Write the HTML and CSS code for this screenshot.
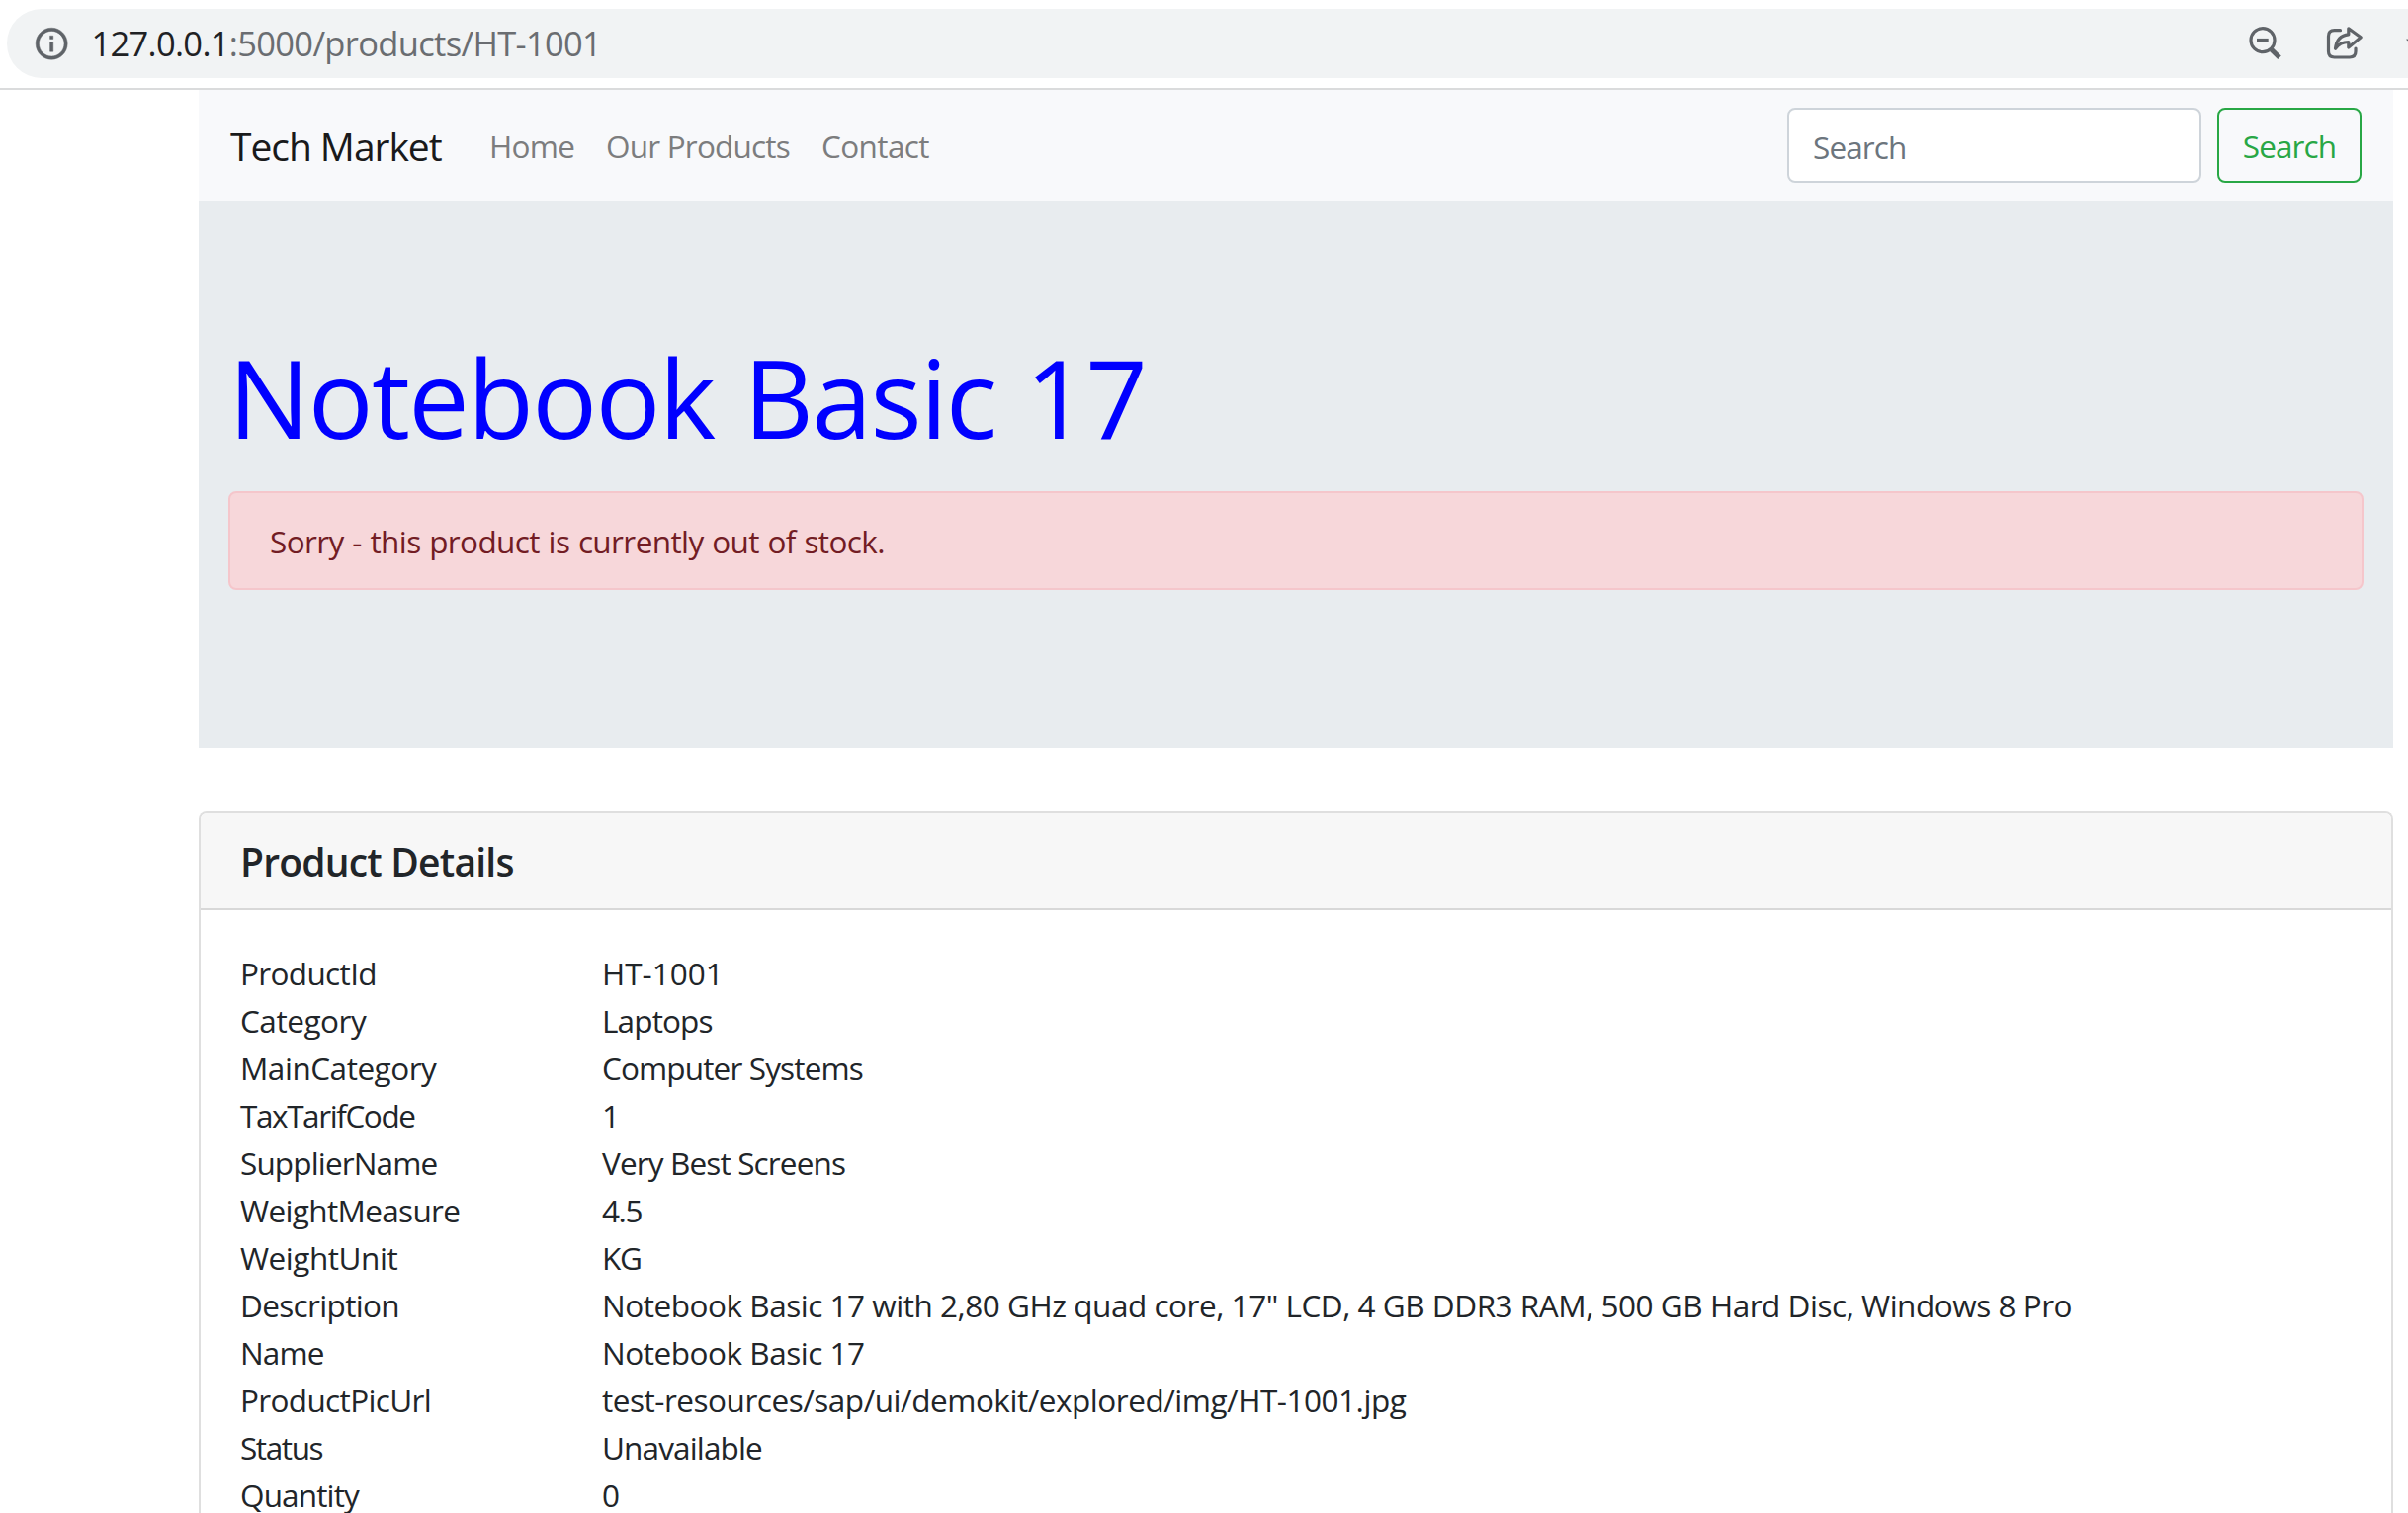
FILE: index.html
```html
<!DOCTYPE html>
<html lang="en">
<head>
<meta charset="utf-8">
<title>Tech Market</title>
<link rel="stylesheet" href="styles.css">
</head>
<body>
<header class="toolbar">
  <div class="address">
    <svg class="info" viewBox="0 0 24 24"><path d="M11 7h2v2h-2zm0 4h2v6h-2zm1-9C6.480 2 2 6.480 2 12s4.480 10 10 10 10-4.480 10-10S17.520 2 12 2zm0 18c-4.410 0-8-3.590-8-8s3.590-8 8-8 8 3.590 8 8-3.590 8-8 8z"/></svg>
    <span class="url"><span class="host">127.0.0.1</span>:5000/products/HT-1001</span>
    <div class="actions">
      <svg class="action zoom" viewBox="0 0 40 40"><circle cx="17" cy="16.700" r="12"/><path d="M11 16.500h11.700"/><path class="handle" d="M25.800 26.200L34 34.200"/></svg>
      <svg class="action share" viewBox="0 0 40 40"><path d="M15.500 6.700h-6q-6 0-6 6v15.300q0 6 6 6h15.500q6 0 6-6v-3"/><path d="M23.800 4.800L36.200 13.700 23.800 24v-5.500C17.500 18.500 13.500 21 10.500 25.300C11.500 16.500 16 11.500 23.800 10.800z"/></svg>
      <svg class="action star" viewBox="0 0 40 40"><path d="M18 4l4.600 10.700 11.600 1-8.800 7.600 2.600 11.300-10-6-10 6 2.600-11.300-8.800-7.600 11.600-1z"/></svg>
    </div>
  </div>
</header>
<div class="container">
  <nav class="navbar">
    <a class="brand">Tech Market</a>
    <ul class="links">
      <li class="home">Home</li>
      <li class="products">Our Products</li>
      <li class="contact">Contact</li>
    </ul>
    <form class="search">
      <input class="search-input" type="text" placeholder="Search">
      <button class="search-button" type="button">Search</button>
    </form>
  </nav>
  <section class="jumbotron">
    <h1 class="title">Notebook Basic 17</h1>
    <div class="alert">Sorry - this product is currently out of stock.</div>
  </section>
  <section class="card">
    <h2 class="card-header">Product Details</h2>
    <dl class="details">
      <dt>ProductId</dt><dd class="wide">HT-1001</dd>
      <dt class="loose">Category</dt><dd class="tight">Laptops</dd>
      <dt class="loose">MainCategory</dt><dd class="tight">Computer Systems</dd>
      <dt class="snug">TaxTarifCode</dt><dd>1</dd>
      <dt class="tight">SupplierName</dt><dd class="tight">Very Best Screens</dd>
      <dt>WeightMeasure</dt><dd class="snug">4.5</dd>
      <dt class="loose">WeightUnit</dt><dd class="snug">KG</dd>
      <dt>Description</dt><dd class="loose">Notebook Basic 17 with 2,80 GHz quad core, 17" LCD, 4 GB DDR3 RAM, 500 GB Hard Disc, Windows 8 Pro</dd>
      <dt class="tight">Name</dt><dd class="loose">Notebook Basic 17</dd>
      <dt>ProductPicUrl</dt><dd class="loose">test-resources/sap/ui/demokit/explored/img/HT-1001.jpg</dd>
      <dt class="snug">Status</dt><dd class="tight">Unavailable</dd>
      <dt class="tight">Quantity</dt><dd>0</dd>
    </dl>
  </section>
</div>
</body>
</html>
```
FILE: styles.css
```css
* { box-sizing: border-box; }
body {
  margin: 0;
  background: #fff;
  color: #212529;
  font-family: "Segoe UI", "Open Sans", sans-serif;
  font-size: 31.5px;
  line-height: 48px;
}

/* Browser address bar */
.toolbar { height: 91px; padding: 9px 0 0 7px; border-bottom: 2px solid #dadbdc; overflow: hidden; }
.address {
  display: flex;
  align-items: center;
  height: 70px;
  padding-left: 26px;
  border-radius: 35px 0 0 35px;
  background: #f1f3f4;
}
.info { flex: none; width: 38.400px; height: 38.400px; fill: #5f6368; stroke: #5f6368; stroke-width: .3; }
.url { margin-left: 21px; font-size: 34.500px; letter-spacing: -.68px; color: #6a6d71; white-space: nowrap; }
.host { color: #202124; }
.actions { display: flex; flex: none; margin-left: auto; margin-right: -36px; gap: 40px; }
.action { width: 40px; height: 40px; fill: none; stroke: #5f6368; stroke-width: 3.200; stroke-linecap: round; stroke-linejoin: round; }
.zoom { stroke-linecap: butt; }
.handle { stroke-width: 5; }
.star { stroke: none; fill: #5f6368; }

.container { width: 2220px; margin-left: 201px; }

/* Navigation */
.navbar { display: flex; align-items: center; height: 112px; padding: 0 32px; background: #f8f9fb; }
.brand { width: 262px; padding-top: 2px; font-size: 39px; letter-spacing: -1.050px; color: #191a1b; white-space: nowrap; }
.links { display: flex; margin: 0; padding: 2px 0 0; list-style: none; color: #7c7d7e; white-space: nowrap; }
.home { width: 118px; letter-spacing: -.7px; }
.products { width: 218px; letter-spacing: -.8px; }
.contact { letter-spacing: -.6px; }
.search { display: flex; gap: 16px; margin-left: auto; }
.search-input, .search-button {
  height: 76px;
  border-radius: 8px;
  font: inherit;
  letter-spacing: -.88px;
}
.search-input { width: 419px; padding: 3px 24px 0; border: 2px solid #ced4da; background: #fff; }
.search-input::placeholder { color: #6c757d; opacity: 1; }
.search-button { width: 146px; padding: 1px 0 0; border: 2px solid #28a745; background: none; color: #28a745; }

/* Product banner */
.jumbotron { height: 554px; padding: 132px 30px 0; background: #e8ecef; }
.title { margin: 0 0 28px; font-size: 109.500px; line-height: 134px; font-weight: 400; letter-spacing: -1.700px; word-spacing: 3px; color: #00f; }
.alert {
  height: 100px;
  padding: 25px 40px 0;
  border: 2px solid #f5c6cb;
  border-radius: 8px;
  background: #f7d7da;
  color: #721c24;
  letter-spacing: -.6px;
  word-spacing: 1px;
}

/* Product details */
.card { height: 710px; margin-top: 64px; border: 2px solid #dfdfdf; border-bottom: 0; border-radius: 8px 8px 0 0; overflow: hidden; }
.card-header {
  height: 98px;
  margin: 0;
  padding: 25px 40px 0;
  border-bottom: 2px solid #d8d8d8;
  background: #f7f7f7;
  font-size: 39px;
  font-weight: 600;
  letter-spacing: -.79px;
}
.details {
  display: grid;
  grid-template-columns: 366px 1fr;
  margin: 0;
  padding: 40px 0 0 40px;
  letter-spacing: -.65px;
  white-space: nowrap;
}
.details dd { margin: 0; }
.details .wide { letter-spacing: 0; }
.loose { letter-spacing: -.47px; }
.tight { letter-spacing: -.86px; }
.snug { letter-spacing: -1.400px; }
```
